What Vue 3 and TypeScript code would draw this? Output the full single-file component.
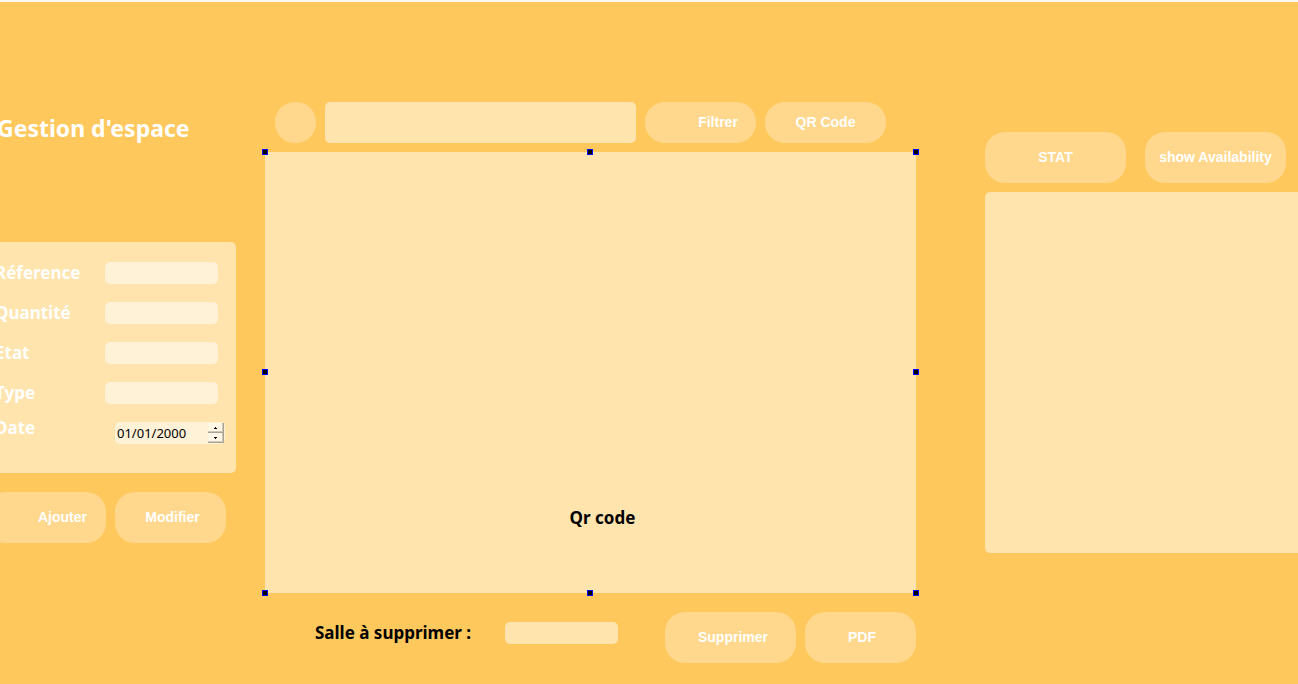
<script setup lang="ts">
import { ref } from 'vue'

interface Field {
  id: string
  label: string
}

const fields: Field[] = [
  { id: 'reference', label: 'Réference' },
  { id: 'quantite', label: 'Quantité' },
  { id: 'etat', label: 'Etat' },
  { id: 'type', label: 'Type' },
]

const handles: string[] = ['nw', 'n', 'ne', 'w', 'e', 'sw', 's', 'se']

const values = ref<Record<string, string>>({ reference: '', quantite: '', etat: '', type: '' })
const search = ref('')
const room = ref('')
const date = ref('01/01/2000')

function shiftDay(step: number): void {
  const [d, m, y] = date.value.split('/').map(Number)
  const next = new Date(y, m - 1, d + step)
  const pad = (n: number) => String(n).padStart(2, '0')
  date.value = `${pad(next.getDate())}/${pad(next.getMonth() + 1)}/${next.getFullYear()}`
}
</script>

<template>
  <main class="page">
    <section class="left">
      <h1 class="title">Gestion d'espace</h1>
      <form class="form" @submit.prevent>
        <div v-for="f in fields" :key="f.id" class="row">
          <label :for="f.id">{{ f.label }}</label>
          <input :id="f.id" v-model="values[f.id]" class="field" type="text" />
        </div>
        <div class="row date-row">
          <label for="date">Date</label>
          <div class="date">
            <input id="date" v-model="date" type="text" />
            <div class="spin">
              <button type="button" aria-label="+" @click="shiftDay(1)">
                <svg width="3" height="2" viewBox="0 0 3 2" shape-rendering="crispEdges"><path d="M1 0h1v1h1v1H0V1h1z" /></svg>
              </button>
              <button type="button" aria-label="-" @click="shiftDay(-1)">
                <svg width="3" height="2" viewBox="0 0 3 2" shape-rendering="crispEdges"><path d="M0 0h3v1H2v1H1V1H0z" /></svg>
              </button>
            </div>
          </div>
        </div>
      </form>
      <div class="actions">
        <button type="button" class="btn add">Ajouter</button>
        <button type="button" class="btn edit">Modifier</button>
      </div>
    </section>

    <section class="center">
      <div class="toolbar">
        <button type="button" class="btn round" aria-label="Rechercher"></button>
        <input v-model="search" class="search" type="text" aria-label="Recherche" />
        <button type="button" class="btn filter">Filtrer</button>
        <button type="button" class="btn qr">QR Code</button>
      </div>
      <div class="canvas">
        <span class="caption">Qr code</span>
        <i v-for="h in handles" :key="h" class="handle" :class="h"></i>
      </div>
      <div class="footer">
        <label for="room">Salle à supprimer :</label>
        <input id="room" v-model="room" class="field room" type="text" />
        <button type="button" class="btn delete">Supprimer</button>
        <button type="button" class="btn pdf">PDF</button>
      </div>
    </section>

    <section class="right">
      <div class="stats">
        <button type="button" class="btn wide">STAT</button>
        <button type="button" class="btn wide">show Availability</button>
      </div>
      <div class="chart"></div>
    </section>
  </main>
</template>

<style>
body {
  margin: 0;
  background: #ffc85c;
}
</style>

<style scoped>
.page,
.page * {
  box-sizing: border-box;
}
.page {
  display: grid;
  grid-template-columns: 236px minmax(560px, 1fr) 313px;
  min-height: 100vh;
  overflow: hidden;
  border-top: 2px solid #faf8f5;
  background: #ffc85c;
  color: #fff;
  font-family: "Noto Sans", Tahoma, sans-serif;
}
input {
  min-width: 0;
  border: 0;
  outline: 0;
  padding: 0 4px;
  font: inherit;
}
label {
  font-size: 17px;
  line-height: 22px;
  font-weight: 700;
  white-space: nowrap;
}

.left {
  margin-left: -5px;
  padding-top: 112px;
}
.title {
  margin: 0;
  height: 128px;
  padding-left: 2px;
  font-size: 23px;
  line-height: 28px;
  white-space: nowrap;
}
.form {
  height: 231px;
  padding-top: 20px;
  border-radius: 5px;
  background: rgba(255, 255, 255, 0.5);
}
.row {
  display: flex;
  justify-content: space-between;
  height: 40px;
  padding-right: 18px;
}
.field {
  width: 113px;
  height: 22px;
  border-radius: 5px;
  background: rgba(255, 255, 255, 0.5);
}
.date-row {
  padding-right: 11px;
}
.date-row label {
  line-height: 12px;
}
.date {
  display: flex;
  width: 110px;
  height: 22px;
  padding: 1px;
  border-radius: 5px;
  background: rgba(255, 255, 255, 0.5);
}
.date input {
  flex: 1;
  padding: 0 1px;
  background: transparent;
  color: #000;
  font-size: 13px;
}
.spin {
  display: flex;
  flex-direction: column;
  width: 16px;
}
.spin button {
  display: flex;
  flex: 1;
  align-items: center;
  justify-content: center;
  padding: 0;
  border: 0 solid #a9a296;
  border-width: 0 1px 1px 0;
  background: #fff6e6;
  box-shadow: inset -1px -1px #d0c7b6;
}

.btn {
  height: 51px;
  padding: 0 0 2px;
  border: 0;
  border-radius: 20px;
  background: rgba(255, 255, 255, 0.3);
  color: #fff;
  font: 700 14px "Liberation Sans", Arial, sans-serif;
  white-space: nowrap;
}
.actions {
  display: flex;
  gap: 9px;
  margin: 19px 0 0 -10px;
}
.add {
  width: 121px;
  padding-left: 34px;
}
.edit {
  width: 111px;
  padding-left: 4px;
}

.center {
  margin: 0 69px 0 29px;
  padding-top: 100px;
}
.toolbar {
  display: flex;
  gap: 9px;
  margin: 0 30px 9px 10px;
}
.toolbar .btn,
.search {
  height: 41px;
}
.round {
  width: 41px;
}
.search {
  flex: 1;
  border-radius: 5px;
  background: rgba(255, 255, 255, 0.5);
}
.filter {
  width: 111px;
  padding-left: 35px;
}
.qr {
  width: 121px;
}
.canvas {
  position: relative;
  height: 441px;
  padding: 355px 0 0 24px;
  background: rgba(255, 255, 255, 0.5);
  text-align: center;
}
.caption {
  color: #000;
  font-size: 17px;
  line-height: 22px;
  font-weight: 700;
}
.handle {
  position: absolute;
  width: 6px;
  height: 6px;
  border: 1px solid #00f;
  background: #000;
}
.nw,
.n,
.ne {
  top: -3px;
}
.w,
.e {
  top: calc(50% - 4px);
}
.sw,
.s,
.se {
  bottom: -3px;
}
.nw,
.w,
.sw {
  left: -3px;
}
.n,
.s {
  left: calc(50% - 4px);
}
.ne,
.e,
.se {
  right: -3px;
}
.footer {
  display: flex;
  align-items: flex-start;
  padding: 19px 0 20px 50px;
}
.footer label {
  flex: 1;
  padding-top: 10px;
  color: #000;
}
.room {
  margin: 10px 47px 0 0;
}
.delete {
  width: 131px;
  padding-left: 5px;
}
.pdf {
  width: 111px;
  margin-left: 9px;
  padding-left: 3px;
}

.right {
  padding-top: 130px;
}
.stats {
  display: flex;
  gap: 19px;
  margin-bottom: 9px;
}
.wide {
  width: 141px;
}
.chart {
  height: 361px;
  border-radius: 5px 0 0 5px;
  background: rgba(255, 255, 255, 0.5);
}
</style>
